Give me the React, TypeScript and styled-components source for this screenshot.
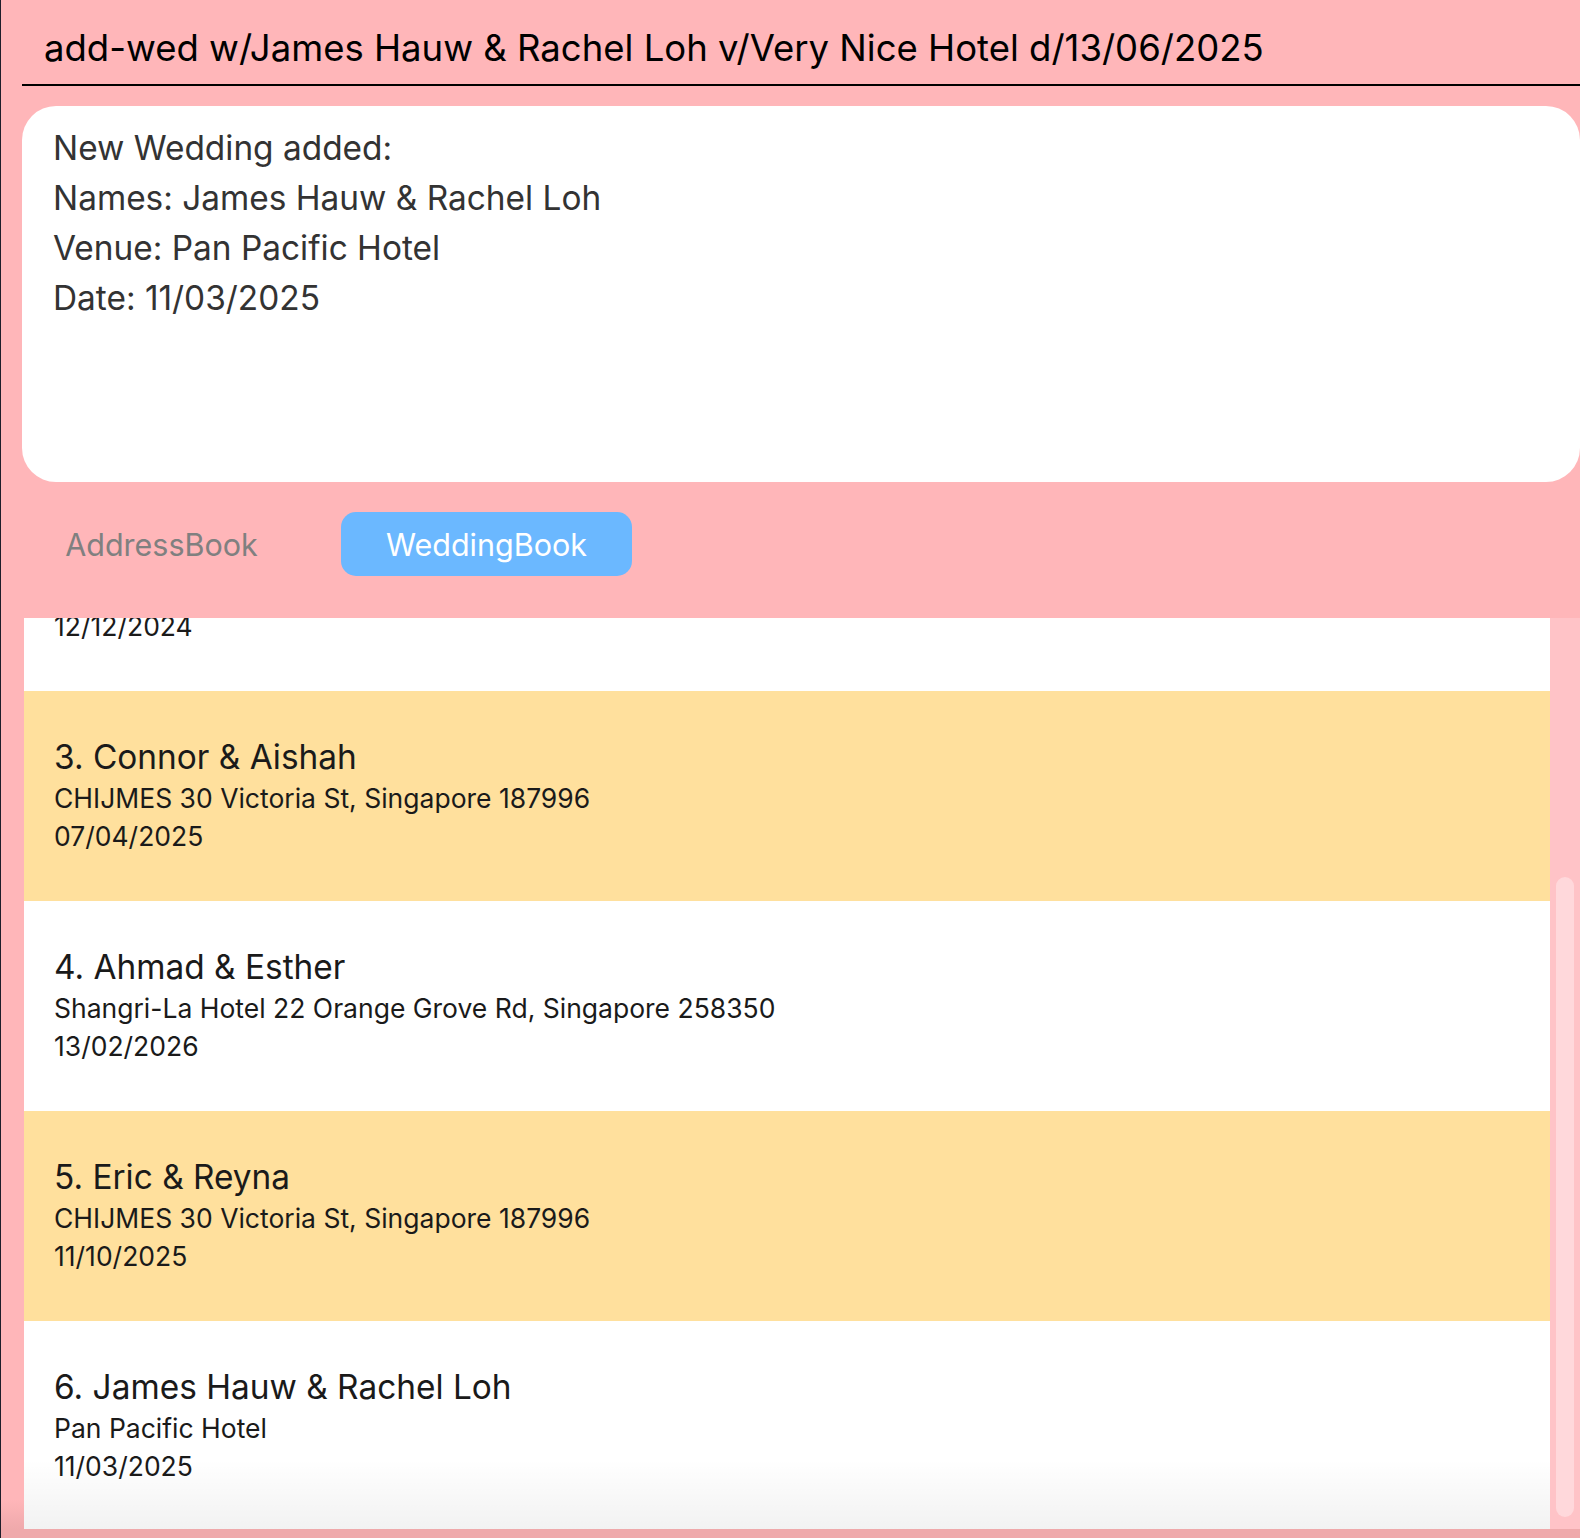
import styled, { createGlobalStyle } from "styled-components";

interface Wedding {
    id: number;
    names: string;
    venue: string;
    date: string;
}

// the list is scrolled, so wedding 2 only shows its date
const weddings: Wedding[] = [
    { id: 2, names: "Daniel & Mei Ling", venue: "Fullerton Hotel 1 Fullerton Square, Singapore 049178", date: "12/12/2024" },
    { id: 3, names: "Connor & Aishah", venue: "CHIJMES 30 Victoria St, Singapore 187996", date: "07/04/2025" },
    { id: 4, names: "Ahmad & Esther", venue: "Shangri-La Hotel 22 Orange Grove Rd, Singapore 258350", date: "13/02/2026" },
    { id: 5, names: "Eric & Reyna", venue: "CHIJMES 30 Victoria St, Singapore 187996", date: "11/10/2025" },
    { id: 6, names: "James Hauw & Rachel Loh", venue: "Pan Pacific Hotel", date: "11/03/2025" },
];

const resultLines = [
    "New Wedding added:",
    "Names: James Hauw & Rachel Loh",
    "Venue: Pan Pacific Hotel",
    "Date: 11/03/2025",
];

const GlobalStyle = createGlobalStyle`
    body {
        margin: 0;
        background: #ffb6b9;
        font-family: Inter, "Open Sans", sans-serif;
    }
`;

const App = () => {
    return (
        <>
            <GlobalStyle />
            <Window>
                <CommandBox>
                    <CommandText>add-wed w/James Hauw &amp; Rachel Loh v/Very Nice Hotel d/13/06/2025</CommandText>
                </CommandBox>
                <ResultBox>
                    {resultLines.map((line) => (
                        <ResultLine key={line}>{line}</ResultLine>
                    ))}
                </ResultBox>
                <TabBar>
                    <Tab active={false}>AddressBook</Tab>
                    <Tab active>WeddingBook</Tab>
                </TabBar>
                <ListPanel>
                    <ListBody>
                        <ListInner>
                            {weddings.map((w) => (
                                <Card key={w.id} highlight={w.id % 2 === 1}>
                                    <CardTitle>{w.id}. {w.names}</CardTitle>
                                    <CardDetail>{w.venue}</CardDetail>
                                    <CardDetail>{w.date}</CardDetail>
                                </Card>
                            ))}
                        </ListInner>
                    </ListBody>
                    <ScrollTrack>
                        <ScrollThumb />
                    </ScrollTrack>
                </ListPanel>
            </Window>
        </>
    );
};

const Window = styled.div`
    width: 1580px;
    height: 1538px;
    box-sizing: border-box;
    border-left: 1px solid #1e1e2a;
    padding-bottom: 9px;
    display: flex;
    flex-direction: column;
    background: linear-gradient(to bottom, #ffb6b9 1500px, #efa9ab 1529px);
    overflow: hidden;
`;

const CommandBox = styled.div`
    margin-left: 21px;
    height: 86px;
    border-bottom: 2px solid #000;
    display: flex;
    align-items: center;
    padding: 12px 0 0 22px;
    box-sizing: border-box;
`;

const CommandText = styled.div`
    font-size: 36.5px;
    color: #000;
    white-space: nowrap;
`;

const ResultBox = styled.div`
    margin: 20px 0 0 21px;
    height: 376px;
    background: #fff;
    border-radius: 34px;
    padding: 17px 31px;
    box-sizing: border-box;
`;

const ResultLine = styled.div`
    font-size: 33.4px;
    line-height: 50px;
    color: #333;
`;

const TabBar = styled.div`
    height: 136px;
    display: flex;
    align-items: flex-start;
    gap: 34px;
    padding: 30px 0 0 15px;
    box-sizing: border-box;
`;

const Tab = styled.div<{ active: boolean }>`
    width: 291px;
    height: 64px;
    border-radius: 15px;
    display: flex;
    align-items: center;
    justify-content: center;
    font-size: 30.5px;
    background: ${({ active }) => (active ? "#6bb8ff" : "transparent")};
    color: ${({ active }) => (active ? "#fff" : "#808080")};
`;

const ListPanel = styled.div`
    flex: 1;
    display: flex;
    margin-left: 23px;
    min-height: 0;
`;

const ListBody = styled.div`
    width: 1526px;
    overflow: hidden;
    position: relative;
    background: #fff;

    &::after {
        content: "";
        position: absolute;
        left: 0;
        right: 0;
        bottom: 0;
        height: 70px;
        background: linear-gradient(to bottom, rgba(0, 0, 0, 0), rgba(0, 0, 0, 0.05));
    }
`;

const ListInner = styled.div`
    margin-top: -137px;
`;

const Card = styled.div<{ highlight: boolean }>`
    height: 210px;
    box-sizing: border-box;
    padding: 46px 0 0 30px;
    background: ${({ highlight }) => (highlight ? "#ffe09d" : "#fff")};
    color: #1a1a1a;
`;

const CardTitle = styled.div`
    font-size: 33.4px;
    line-height: 40px;
    margin-bottom: 2px;
`;

const CardDetail = styled.div`
    font-size: 26.5px;
    line-height: 38px;
`;

const ScrollTrack = styled.div`
    flex: 1;
    background: #ffc3c7;
    padding: 259px 6px 12px;
    box-sizing: border-box;
    display: flex;
`;

const ScrollThumb = styled.div`
    flex: 1;
    border-radius: 9px;
    background: #ffd8db;
`;

export default App;
